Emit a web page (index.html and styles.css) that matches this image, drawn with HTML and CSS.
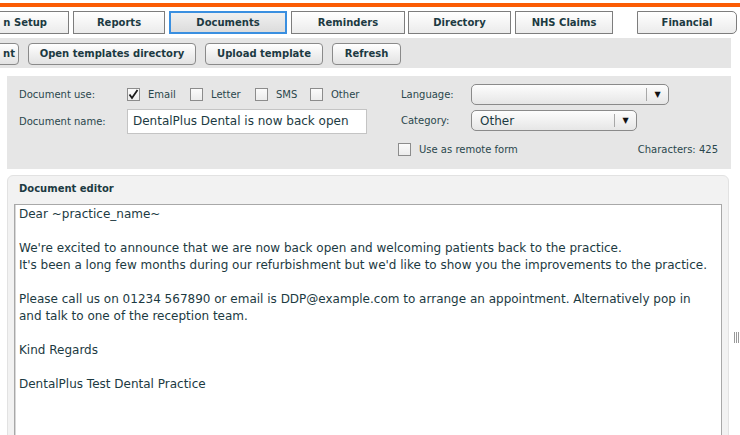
FILE: index.html
```html
<!DOCTYPE html>
<html>
<head>
<meta charset="utf-8">
<link rel="stylesheet" href="styles.css">
</head>
<body>
<div class="topline"></div>
<nav class="tabs">
  <div class="tab tab-setup"><span>n Setup</span></div>
  <div class="tab tab-reports">Reports</div>
  <div class="tab tab-documents active">Documents</div>
  <div class="tab tab-reminders">Reminders</div>
  <div class="tab tab-directory">Directory</div>
  <div class="tab tab-nhs">NHS Claims</div>
  <div class="tab tab-financial">Financial</div>
</nav>
<div class="toolbar">
  <button class="btn btn-cut">nt</button>
  <button class="btn btn-open">Open templates directory</button>
  <button class="btn btn-upload">Upload template</button>
  <button class="btn btn-refresh">Refresh</button>
</div>
<section class="form-panel">
  <div class="form-left">
    <div class="row row-use">
      <span class="label">Document use:</span>
      <div class="checks">
        <label class="check check-email"><span class="box"><svg viewBox="0 0 13 13" width="13" height="13"><path d="M2.5 6.5 L5 10 L10.5 2" fill="none" stroke="#1a1a1a" stroke-width="1.8"/></svg></span>Email</label>
        <label class="check check-letter"><span class="box"></span>Letter</label>
        <label class="check check-sms"><span class="box"></span>SMS</label>
        <label class="check"><span class="box"></span>Other</label>
      </div>
    </div>
    <div class="row row-name">
      <span class="label">Document name:</span>
      <div class="text-input">DentalPlus Dental is now back open</div>
    </div>
  </div>
  <div class="form-right">
    <div class="row row-lang">
      <span class="label label-r">Language:</span>
      <div class="select select-lang"><span class="select-val"></span><span class="select-arrow">▼</span></div>
    </div>
    <div class="row row-cat">
      <span class="label label-r">Category:</span>
      <div class="select select-cat"><span class="select-val">Other</span><span class="select-arrow">▼</span></div>
    </div>
    <div class="row row-remote">
      <label class="check"><span class="box"></span>Use as remote form</label>
      <span class="chars">Characters: 425</span>
    </div>
  </div>
</section>
<div class="editor-wrap">
  <section class="editor-panel">
    <div class="editor-title">Document editor</div>
    <div class="editor">
      <p>Dear ~practice_name~</p>
      <p>We're excited to announce that we are now back open and welcoming patients back to the practice.<br>It's been a long few months during our refurbishment but we'd like to show you the improvements to the practice.</p>
      <p>Please call us on 01234 567890 or email is DDP@example.com to arrange an appointment. Alternatively pop in<br>and talk to one of the reception team.</p>
      <p>Kind Regards</p>
      <p>DentalPlus Test Dental Practice</p>
    </div>
  </section>
  <div class="grip"><i></i><i></i><i></i></div>
</div>
</body>
</html>
```
FILE: styles.css
```css
* { box-sizing: border-box; }
html, body { margin: 0; padding: 0; background: #fff; overflow: hidden; }
body {
  width: 740px; height: 435px;
  font-family: "DejaVu Sans", Verdana, sans-serif;
  color: #1c3a42;
  font-size: 10px;
}
.topline { margin-top: 3px; height: 4px; background: #fb5c05; }

.tabs { display: flex; margin-top: 4px; height: 23px; margin-left: -41px; }
.tab {
  height: 23px; border: 1px solid #7d7d7d;
  background: linear-gradient(#ffffff, #ebebeb);
  font-weight: bold; font-size: 10px; color: #1c3a42;
  display: flex; align-items: center; justify-content: center;
  margin-right: 4px; flex: none;
}
.tab-setup { width: 110px; justify-content: flex-end; padding-right: 21px; }
.tab-reports { width: 92px; }
.tab-documents { width: 118px; }
.tab-reminders { width: 114px; margin-right: 3px; }
.tab-directory { width: 103px; }
.tab-nhs { width: 98px; margin-right: 24px; }
.tab-financial { width: 100px; border-radius: 0 5px 5px 0; }
.tab.active { border: 2px solid #3a8fe0; background: linear-gradient(#f0f0f0, #dcdcdc); }

.toolbar {
  margin-top: 4px; width: 731px; height: 30px; background: #e5e5e5;
  display: flex; align-items: center; gap: 9px; padding-top: 1px;
}
.btn {
  height: 22px; border: 1px solid #8a8a8a; border-radius: 4px;
  background: linear-gradient(#ffffff, #e2e2e2);
  font-family: inherit; font-weight: bold; font-size: 10px; color: #1c3a42;
  padding: 0; flex: none;
}
.btn-cut { width: 60px; margin-left: -41px; text-align: right; padding-right: 3px; }
.btn-open { width: 168px; }
.btn-upload { width: 118px; }
.btn-refresh { width: 69px; }

.form-panel {
  margin: 8px 9px 0 7px; height: 93px; background: #e6e6e6;
  display: flex; padding: 8px 0 0 12px;
}
.form-left { width: 379px; }
.row { display: flex; align-items: center; }
.row-use, .row-lang { height: 21px; }
.label { width: 108px; color: #2a464c; }
.checks { display: flex; align-items: center; }
.check { display: flex; align-items: center; color: #2a464c; }
.check-email { width: 63px; }
.check-letter { width: 65px; }
.check-sms { width: 55px; }
.box {
  width: 13px; height: 13px; border: 1px solid #8c8c8c; background: linear-gradient(#fbfbfb, #ececec);
  margin-right: 8px; display: inline-block; position: relative; flex: none;
}
.box svg { position: absolute; left: -1px; top: -1px; }
.row-name { margin-top: 4px; }
.text-input {
  width: 240px; height: 25px; background: #fff; border: 1px solid #c4c4c4;
  font-size: 12px; padding: 4px 5px; color: #1c3a42; white-space: nowrap;
}

.form-right { width: 320px; }
.label-r { padding-left: 3px; width: 73px; }
.select {
  height: 21px; border: 1px solid #8a8a8a; border-radius: 5px;
  background: linear-gradient(#fdfdfd, #e6e6e6);
  display: flex; align-items: stretch;
}
.select-lang { width: 198px; }
.select-cat { width: 166px; }
.select-val { flex: 1; font-size: 12px; padding-left: 8px; display: flex; align-items: center; border-right: 1px solid #a8a8a8; margin: 3px 0; }
.select-arrow { width: 21px; font-size: 8px; display: flex; align-items: center; justify-content: center; color: #111; }
.row-cat { margin-top: 5px; }
.row-remote { margin-top: 12px; justify-content: space-between; height: 13px; }
.chars { color: #2a464c; }

.editor-wrap { display: flex; margin-top: 6px; }
.editor-panel {
  margin-left: 7px; width: 722px; height: 270px;
  background: #f2f2f2; border: 1px solid #e2e2e2; border-radius: 6px 6px 0 0;
  padding: 6px 6px 0 6px;
}
.editor-title { font-weight: bold; font-size: 10px; padding-left: 5px; height: 17px; line-height: 14px; color: #1c3a42; }
.editor {
  margin-top: 5px; background: #fff; border: 1px solid #a8a8a8; height: 260px;
  padding: 1px 4px; font-size: 12px; line-height: 17px; color: #1c3a42;
  box-shadow: inset 1px 0 0 #d8d8d8;
}
.editor p { margin: 0 0 17px; }
.grip { display: flex; gap: 1px; margin: 157px 0 0 5px; height: 11px; }
.grip i { width: 1px; background: #999; height: 11px; }
```
